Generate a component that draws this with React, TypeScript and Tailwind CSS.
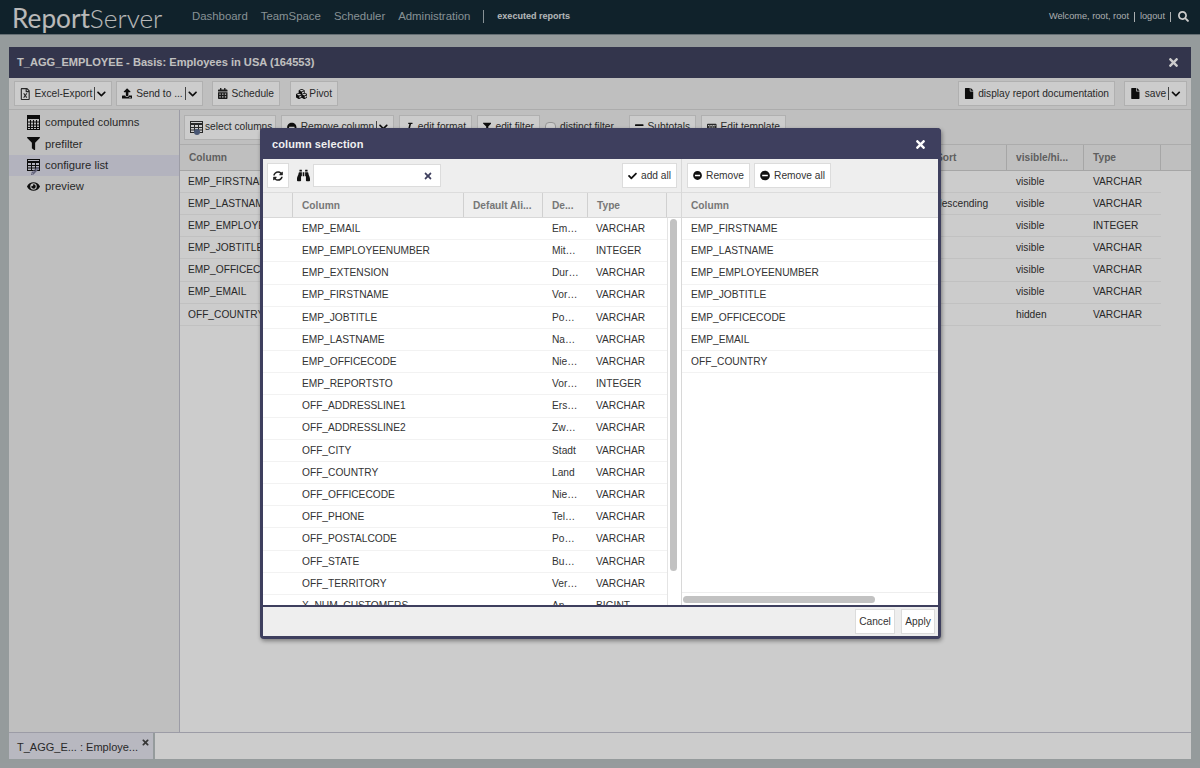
import type { ReactNode } from "react";
import {
  FaBinoculars,
  FaCalendarAlt,
  FaCheck,
  FaChevronDown,
  FaCubes,
  FaEquals,
  FaEye,
  FaFile,
  FaFilter,
  FaItalic,
  FaKeyboard,
  FaMinusCircle,
  FaPencilAlt,
  FaRegFileExcel,
  FaSearch,
  FaSyncAlt,
  FaTimes,
  FaUpload,
} from "react-icons/fa";

const available = [
  ["EMP_EMAIL", "Em…", "VARCHAR"],
  ["EMP_EMPLOYEENUMBER", "Mit…", "INTEGER"],
  ["EMP_EXTENSION", "Dur…", "VARCHAR"],
  ["EMP_FIRSTNAME", "Vor…", "VARCHAR"],
  ["EMP_JOBTITLE", "Po…", "VARCHAR"],
  ["EMP_LASTNAME", "Na…", "VARCHAR"],
  ["EMP_OFFICECODE", "Nie…", "VARCHAR"],
  ["EMP_REPORTSTO", "Vor…", "INTEGER"],
  ["OFF_ADDRESSLINE1", "Ers…", "VARCHAR"],
  ["OFF_ADDRESSLINE2", "Zw…", "VARCHAR"],
  ["OFF_CITY", "Stadt", "VARCHAR"],
  ["OFF_COUNTRY", "Land", "VARCHAR"],
  ["OFF_OFFICECODE", "Nie…", "VARCHAR"],
  ["OFF_PHONE", "Tel…", "VARCHAR"],
  ["OFF_POSTALCODE", "Po…", "VARCHAR"],
  ["OFF_STATE", "Bu…", "VARCHAR"],
  ["OFF_TERRITORY", "Ver…", "VARCHAR"],
  ["X_NUM_CUSTOMERS", "An…", "BIGINT"],
];

const selected = [
  ["EMP_FIRSTNAME", "", "visible", "VARCHAR"],
  ["EMP_LASTNAME", "descending", "visible", "VARCHAR"],
  ["EMP_EMPLOYEENUMBER", "", "visible", "INTEGER"],
  ["EMP_JOBTITLE", "", "visible", "VARCHAR"],
  ["EMP_OFFICECODE", "", "visible", "VARCHAR"],
  ["EMP_EMAIL", "", "visible", "VARCHAR"],
  ["OFF_COUNTRY", "", "hidden", "VARCHAR"],
];

const TableIcon = () => (
  <svg width="13" height="12" viewBox="0 0 13 12" fill="none" stroke="currentColor" strokeWidth="1">
    <rect x="0.5" y="0.5" width="12" height="11" />
    <path d="M0 3h13" strokeWidth="2" />
    <path d="M0 6.5h13M0 9h13M4.5 2v10M8.5 2v10" />
  </svg>
);

const CalcIcon = () => (
  <svg width="13" height="15" viewBox="0 0 13 15" fill="none" stroke="currentColor" strokeWidth="1">
    <rect x="0.5" y="0.5" width="12" height="14" />
    <path d="M0 2.5h13" strokeWidth="3" />
    <path d="M0 7h13M0 10h13M0 12.5h13M3.5 5v10M6.5 5v10M9.5 5v10" />
  </svg>
);

const Btn = ({ children, className = "" }: { children: ReactNode; className?: string }) => (
  <div className={`flex h-[25px] shrink-0 items-center gap-1 whitespace-nowrap border border-[#dcdcdc] bg-white px-[5px] text-[10.2px] text-[#333] ${className}`}>
    {children}
  </div>
);

const Caret = () => (
  <>
    <span className="-ml-[2px] h-[13px] border-l border-[#555]" />
    <FaChevronDown className="-ml-[2px] text-[10px] text-[#111]" />
  </>
);

const HeadCell = ({ children, className = "" }: { children?: ReactNode; className?: string }) => (
  <div className={`flex h-full shrink-0 items-center overflow-hidden whitespace-nowrap border-r border-[#d0d0d0] pl-[9px] text-[10.2px] font-bold text-[#777] ${className}`}>
    {children}
  </div>
);

const SideItem = ({ icon, label, active }: { icon: ReactNode; label: string; active?: boolean }) => (
  <div className={`flex h-[21.3px] items-center gap-[5px] pl-[17px] text-[11.25px] text-[#333] ${active ? "bg-[#e0e0ee]" : ""}`}>
    <span className="relative flex w-[14px] justify-center text-[13px] text-[#111]">{icon}</span>
    {label}
  </div>
);

export default function App() {
  return (
    <div className="relative flex h-[768px] w-[1200px] flex-col overflow-hidden bg-[#bbc2c4] font-[Liberation_Sans,Arial,sans-serif]">
      {/* top bar */}
      <header className="flex h-[35px] shrink-0 items-center border-b border-[#7d8a90] bg-[#152b36] pl-3 pr-[11px]">
        <div className="w-[180px] pt-[2px] text-[26.2px] leading-none text-[#e8e8e8] font-[Lato,sans-serif]">
          <span className="font-normal">Report</span>
          <span className="font-light">Server</span>
        </div>
        <nav className="flex items-center gap-[13px] text-[11.4px] text-[#a9b6bb]">
          <span>Dashboard</span>
          <span>TeamSpace</span>
          <span>Scheduler</span>
          <span>Administration</span>
          <span className="h-[13px] border-l border-[#a9b6bb]" />
          <span className="text-[9px] font-bold text-[#e0e4e6]">executed reports</span>
        </nav>
        <div className="ml-auto flex items-center gap-[5px] text-[9.2px] text-[#d5dadc]">
          <span>Welcome, root, root</span>
          <span className="h-[10px] border-l border-[#d5dadc]" />
          <span>logout</span>
          <span className="h-[10px] border-l border-[#d5dadc]" />
          <FaSearch className="ml-[2px] text-[11px] text-white" />
        </div>
      </header>

      {/* report window */}
      <main className="mx-[9px] mb-[9px] mt-3 flex min-h-0 flex-1 flex-col">
        <div className="flex h-[31px] shrink-0 items-center justify-between bg-[#40435f] pl-2 pr-[11px] text-[11.1px] font-bold text-[#f0f0f0]">
          <span>T_AGG_EMPLOYEE - Basis: Employees in USA (164553)</span>
          <FaTimes className="text-[13px] text-white" />
        </div>
        <div className="flex h-[32px] shrink-0 items-center justify-between border-b border-[#d8d8d8] bg-[#efefef] pl-[5px] pr-1">
          <div className="flex items-center">
            <Btn className="mr-1 w-[98px]"><FaRegFileExcel className="text-[12px]" />Excel-Export<Caret /></Btn>
            <Btn className="mr-[9px] w-[87px]"><FaUpload className="text-[11px] text-[#111]" />Send to ...<Caret /></Btn>
            <Btn className="mr-[10px] w-[68px]"><FaCalendarAlt className="text-[11px] text-[#222]" />Schedule</Btn>
            <Btn className="w-[48px] gap-[2px]"><FaCubes className="text-[14px] text-[#111]" />Pivot</Btn>
          </div>
          <div className="flex items-center">
            <Btn className="mr-[9px] w-[157px]"><FaFile className="text-[11px] text-[#111]" />display report documentation</Btn>
            <Btn className="w-[63px]"><FaFile className="text-[11px] text-[#111]" />save<Caret /></Btn>
          </div>
        </div>

        <div className="flex min-h-0 flex-1 bg-white">
          <aside className="w-[171px] shrink-0 border-r border-[#c4c4d0] bg-[#efefef] pt-[2px]">
            <SideItem icon={<CalcIcon />} label="computed columns" />
            <SideItem icon={<FaFilter />} label="prefilter" />
            <SideItem
              active
              icon={
                <>
                  <TableIcon />
                  <FaPencilAlt className="absolute -bottom-[4px] left-[5px] text-[8px] text-[#7c7c9c]" />
                </>
              }
              label="configure list"
            />
            <SideItem icon={<FaEye />} label="preview" />
          </aside>
          <section className="min-w-0 flex-1">
            <div className="flex h-[35px] items-center border-b border-[#d8d8d8] bg-[#efefef] pl-1">
              <Btn className="mr-[5px] w-[92px] gap-[2px]">
                <span className="relative flex text-[#333]">
                  <TableIcon />
                  <span className="absolute -bottom-[2px] left-[4px] h-[6px] w-[6px] rounded-full bg-[#5a6c90]" />
                </span>
                select columns
              </Btn>
              <Btn className="mr-[5px] w-[113px]"><FaMinusCircle className="text-[11px] text-[#111]" />Remove column<Caret /></Btn>
              <Btn className="mr-[5px] w-[73px]"><FaItalic className="text-[10px] text-[#111]" />edit format</Btn>
              <Btn className="mr-[5px] w-[63px]"><FaFilter className="text-[10px] text-[#111]" />edit filter</Btn>
              <span className="mr-1 h-[11px] w-[11px] rounded-sm border border-[#bbb] bg-white" />
              <span className="w-[69px] text-[10.2px] text-[#333]">distinct filter</span>
              <Btn className="mr-[5px] w-[67px]"><FaEquals className="text-[10px] text-[#111]" />Subtotals</Btn>
              <Btn className="w-[85px]"><FaKeyboard className="text-[12px] text-[#333]" />Edit template</Btn>
            </div>
            <div className="flex h-[25.8px] items-center border-b border-[#d0d0d0] bg-[#efefef]">
              <HeadCell className="w-[756px]">Column</HeadCell>
              <HeadCell className="w-[71px] !pl-0">Sort</HeadCell>
              <HeadCell className="w-[77px]">visible/hi...</HeadCell>
              <HeadCell className="w-[77px]">Type</HeadCell>
            </div>
            {selected.map((r) => (
              <div key={r[0]} className="flex h-[22.15px] w-[981px] items-center border-b border-[#f2f2f2] text-[10.2px] text-[#333]">
                <span className="w-[756px] shrink-0 pl-2">{r[0]}</span>
                <span className="w-[71px] shrink-0">{r[1]}</span>
                <span className="w-[77px] shrink-0 pl-[9px]">{r[2]}</span>
                <span className="pl-[9px]">{r[3]}</span>
              </div>
            ))}
          </section>
        </div>

        <div className="flex h-[27px] shrink-0 border-t border-[#c4c4d0] bg-white">
          <div className="flex w-[146px] items-start whitespace-nowrap border-r-[2px] border-[#bbc2c4] bg-[#e6e6f0] pl-2 pt-[6px] text-[11px] text-[#333]">
            T_AGG_E... : Employe...
            <FaTimes className="ml-[3px] -mt-[1px] text-[9px] text-[#444]" />
          </div>
        </div>
      </main>

      {/* mask */}
      <div className="absolute inset-0 bg-black/20" />

      {/* column selection dialog */}
      <div className="absolute left-[260px] top-[128px] flex h-[511px] w-[681px] flex-col rounded-sm border-[3px] border-t-0 border-[#3e3f5e] bg-white shadow-[1px_2px_4px_rgba(0,0,0,0.4)]">
        <div className="-mx-[3px] flex h-[31px] shrink-0 items-center justify-between rounded-t-sm bg-[#3e3f5e] pl-3 pr-[14px] pt-[1px] text-[11px] font-bold tracking-[0.1px] text-[#f0f0f0]">
          <span>column selection</span>
          <FaTimes className="text-[13px] text-white" />
        </div>
        <div className="flex min-h-0 flex-1">
          {/* available columns */}
          <div className="flex w-[419px] shrink-0 flex-col border-r border-[#d8d8d8]">
            <div className="flex h-[34px] shrink-0 items-center border-b border-[#dcdcdc] bg-[#eeeeee] pl-1 pr-1">
              <Btn className="w-[22px] justify-center !px-0"><FaSyncAlt className="text-[10px] text-[#222]" /></Btn>
              <FaBinoculars className="ml-2 text-[13px] text-[#111]" />
              <div className="ml-[3px] flex h-[23px] w-[128px] items-center justify-end border border-[#dcdcdc] bg-white pr-[7px]">
                <FaTimes className="text-[10px] text-[#3e3f5e]" />
              </div>
              <Btn className="ml-auto w-[55px]"><FaCheck className="text-[10px] text-[#111]" />add all</Btn>
            </div>
            <div className="flex h-[25px] shrink-0 items-center border-b border-[#d8d8d8] bg-[#eeeeee]">
              <HeadCell className="w-[30px]" />
              <HeadCell className="w-[171px] pt-[1px]">Column</HeadCell>
              <HeadCell className="w-[79px] pt-[1px]">Default Ali...</HeadCell>
              <HeadCell className="w-[45px] pt-[1px]">De...</HeadCell>
              <HeadCell className="w-[79px] pt-[1px]">Type</HeadCell>
            </div>
            <div className="flex min-h-0 flex-1">
              <div className="w-[404px] shrink-0 overflow-hidden">
                {available.map((r) => (
                  <div key={r[0]} className="flex h-[22.18px] items-center border-b border-[#f2f2f2] text-[10.2px] text-[#333]">
                    <span className="ml-[39px] w-[250px] shrink-0">{r[0]}</span>
                    <span className="w-[44px] shrink-0">{r[1]}</span>
                    <span>{r[2]}</span>
                  </div>
                ))}
              </div>
              <div className="flex-1 border-l border-[#e4e4e4] pl-[2px] pt-[1px]">
                <div className="h-[352px] w-[7px] rounded-full bg-[#c2c2c2]" />
              </div>
            </div>
          </div>
          {/* selected columns */}
          <div className="flex min-w-0 flex-1 flex-col">
            <div className="flex h-[34px] shrink-0 items-center gap-1 border-b border-[#dcdcdc] bg-[#eeeeee] pl-[5px]">
              <Btn className="w-[63px]"><FaMinusCircle className="text-[11px] text-[#111]" />Remove</Btn>
              <Btn className="w-[77px]"><FaMinusCircle className="text-[11px] text-[#111]" />Remove all</Btn>
            </div>
            <div className="flex h-[25px] shrink-0 items-center border-b border-[#d8d8d8] bg-[#eeeeee] pt-[1px]">
              <div className="pl-[9px] text-[10.2px] font-bold text-[#777]">Column</div>
            </div>
            <div className="min-h-0 flex-1">
              {selected.map((r) => (
                <div key={r[0]} className="flex h-[22.18px] items-center border-b border-[#f2f2f2] pl-[9px] text-[10.2px] text-[#333]">
                  {r[0]}
                </div>
              ))}
            </div>
            <div className="flex h-[13px] shrink-0 items-center border-t border-[#eeeeee] pl-[1px]">
              <div className="h-[7px] w-[192px] rounded-full bg-[#c2c2c2]" />
            </div>
          </div>
        </div>
        <div className="flex h-[31px] shrink-0 items-center justify-end gap-[6px] border-t-[2px] border-[#3e3f5e] bg-[#eeeeee] pr-[3px]">
          <Btn className="h-[24px] w-[40px] justify-center !px-0">Cancel</Btn>
          <Btn className="h-[24px] w-[34px] justify-center !px-0">Apply</Btn>
        </div>
      </div>
    </div>
  );
}
